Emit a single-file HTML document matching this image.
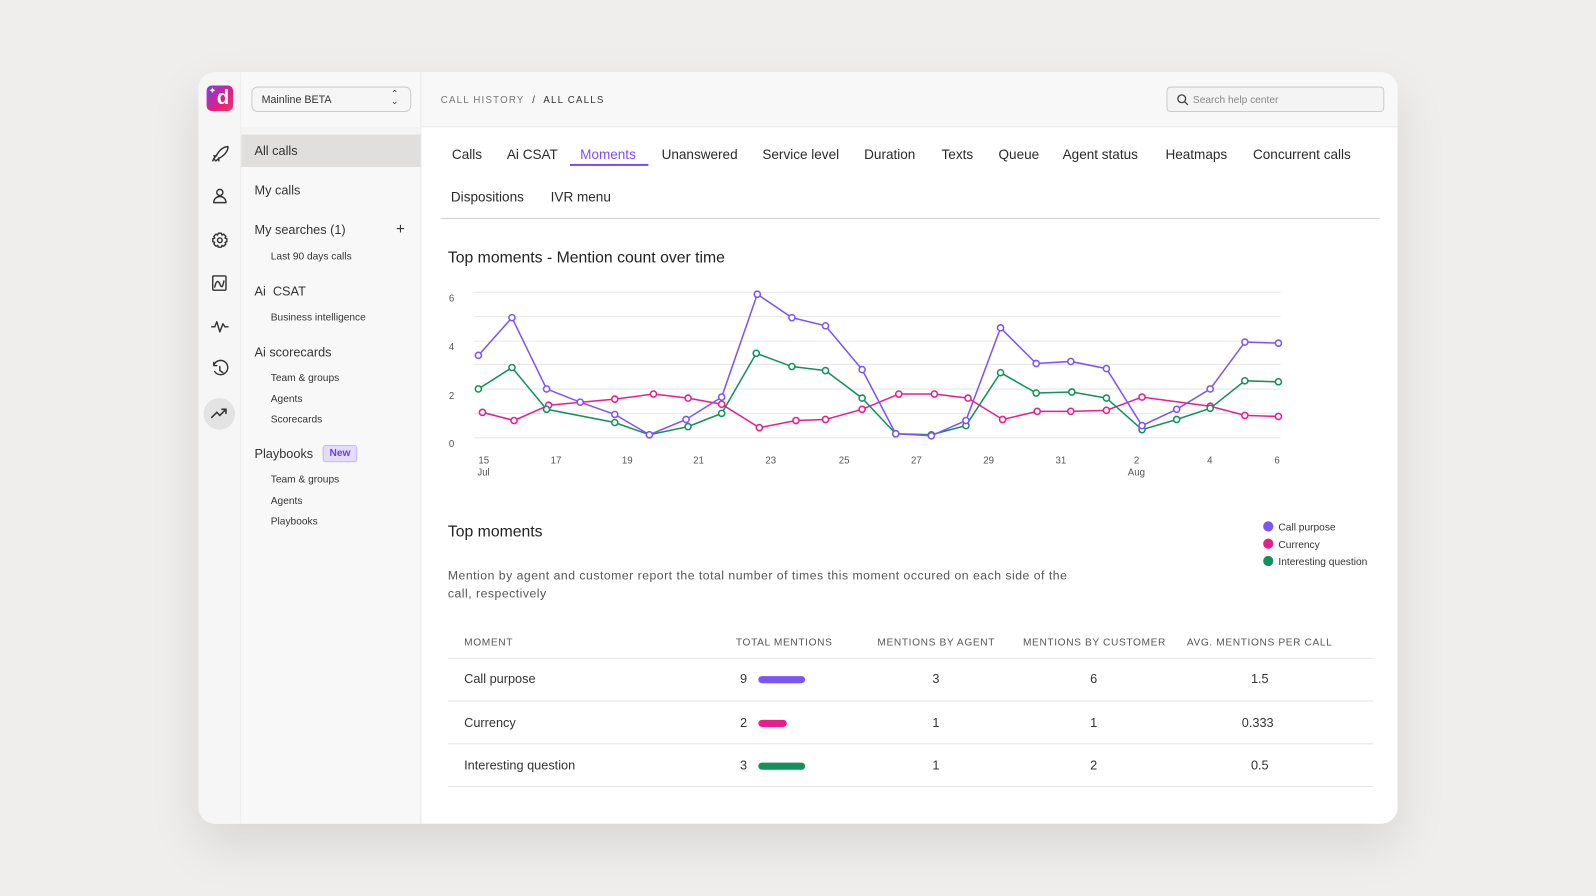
<!DOCTYPE html>
<html><head><meta charset="utf-8"><style>
*{margin:0;padding:0;box-sizing:border-box}
body{width:1596px;height:896px;overflow:hidden;background:#efeeec;font-family:"Liberation Sans",sans-serif;color:#222}
#w{position:absolute;left:0;top:0;width:1568px;height:880px;transform:scale(1.01786,1.01818);transform-origin:0 0}
.a{position:absolute;white-space:nowrap}
#card{position:absolute;left:195px;top:71px;width:1178px;height:738px;border-radius:16px;background:#fff;overflow:hidden;box-shadow:0 20px 50px rgba(0,0,0,.10)}
.tab{font-size:13.3px;color:#2a2a2a;font-weight:500}
.sb{font-size:12.5px;color:#333}
.sub{font-size:10px;color:#333}
.th{font-size:10px;letter-spacing:.6px;color:#555}
.td{font-size:12.5px;color:#333}
</style></head><body><div id="w">
<div id="card">
 <div class="a" style="left:0;top:0;width:42px;height:738px;background:#f6f6f6;border-right:1px solid #ececec"></div>
 <div class="a" style="left:42px;top:0;width:177px;height:738px;background:#f8f8f8;border-right:1px solid #e8e8e8"></div>
 <div class="a" style="left:219px;top:0;width:959px;height:54px;background:#f8f8f8;border-bottom:1px solid #ececec"></div>
 <div class="a" style="left:42px;top:54px;width:177px;height:6px;background:#f3f3f3"></div>
</div>
<div class="a" style="left:203px;top:84px;width:26px;height:25px;border-radius:5px;background:linear-gradient(135deg,#7b3fe4,#e0207f 60%,#f0386a)"></div>
<div class="a" style="left:213px;top:85px;font-size:20px;font-weight:bold;color:#fff">d</div>
<div class="a" style="left:205px;top:84px;font-size:9px;color:#fff">✦</div>
<svg class="a" style="left:205px;top:140px" width="22" height="290" viewBox="0 0 22 290" fill="none" stroke="#333" stroke-width="1.4" stroke-linecap="round" stroke-linejoin="round">
 <path d="M5 16l3-4c3-5 7-8 11-8c0 4-3 8-8 11l-4 3zM8 13l-3 0M10 15v3M6 14l-2 4"/>
 <circle cx="11" cy="49" r="3"/><path d="M5 59c0-4 3-6 6-6s6 2 6 6z"/>
 <circle cx="11" cy="96" r="2.3"/><path d="M9.5 89h3l.6 1.8 1.7-.8 2.1 2.1-.8 1.7 1.8.6v3l-1.8.6.8 1.7-2.1 2.1-1.7-.8-.6 1.8h-3l-.6-1.8-1.7.8-2.1-2.1.8-1.7-1.8-.6v-3l1.8-.6-.8-1.7 2.1-2.1 1.7.8z"/>
 <rect x="4" y="131" width="13" height="14" rx="1"/><path d="M6 142c1-5 3-8 5-3s3 2 4-3"/>
 <path d="M3 181h3l2-5 3 10 3-8 2 3h3"/>
 <path d="M5 219a7 7 0 1 1 1 6M5 219v-3M5 219h3M11 220v4l3 2"/>
</svg>
<div class="a" style="left:200px;top:391px;width:31px;height:31px;border-radius:50%;background:#e3e3e3"></div>
<svg class="a" style="left:206px;top:398px" width="20" height="16" fill="none" stroke="#333" stroke-width="1.5" stroke-linecap="round"><path d="M2 12l5-5 3 3 6-6M12 4h4v4"/></svg>
<div class="a" style="left:247px;top:85px;width:157px;height:25px;border:1px solid #ccc;border-radius:6px;background:#f6f6f6"></div>
<div class="a sub" style="left:257px;top:92px;font-size:10.5px">Mainline BETA</div>
<div class="a" style="left:384px;top:89px;font-size:9px;color:#333;line-height:7px">⌃<br>⌄</div>
<div class="a" style="left:237px;top:132px;width:176px;height:32px;background:#e0dfdd"></div>
<div class="a sb" style="left:250px;top:141px">All calls</div>
<div class="a sb" style="left:250px;top:180px">My calls</div>
<div class="a sb" style="left:250px;top:219px">My searches (1)</div>
<div class="a" style="left:389px;top:217px;font-size:15px;color:#333">+</div>
<div class="a sub" style="left:266px;top:247px">Last 90 days calls</div>
<div class="a sb" style="left:250px;top:279px">Ai&nbsp; CSAT</div>
<div class="a sub" style="left:266px;top:307px">Business intelligence</div>
<div class="a sb" style="left:250px;top:339px">Ai scorecards</div>
<div class="a sub" style="left:266px;top:366px">Team &amp; groups</div>
<div class="a sub" style="left:266px;top:387px">Agents</div>
<div class="a sub" style="left:266px;top:407px">Scorecards</div>
<div class="a sb" style="left:250px;top:439px">Playbooks</div>
<div class="a" style="left:317px;top:437px;width:34px;height:17px;border-radius:3px;background:#e4dcfd;border:1px solid #c7b6fb;color:#6a3fe6;font-size:10px;font-weight:bold;text-align:center;line-height:15px">New</div>
<div class="a sub" style="left:266px;top:466px">Team &amp; groups</div>
<div class="a sub" style="left:266px;top:487px">Agents</div>
<div class="a sub" style="left:266px;top:507px">Playbooks</div>
<div class="a" style="left:433px;top:93px;font-size:9.5px;letter-spacing:1.2px;color:#777">CALL HISTORY <b style="color:#333;font-weight:normal">&nbsp;/&nbsp; ALL CALLS</b></div>
<div class="a" style="left:1146px;top:85px;width:214px;height:25px;border:1px solid #ccc;border-radius:4px;background:#f4f4f4"></div>
<svg class="a" style="left:1156px;top:92px" width="12" height="12" fill="none" stroke="#444" stroke-width="1.3"><circle cx="5" cy="5" r="3.8"/><path d="M8 8l3 3"/></svg>
<div class="a" style="left:1172px;top:93px;font-size:10px;color:#888">Search help center</div>
<div class="a tab" style="left:444px;top:144px">Calls</div>
<div class="a tab" style="left:498px;top:144px">Ai CSAT</div>
<div class="a tab" style="left:570px;top:144px;color:#7c4dff">Moments</div>
<div class="a" style="left:560px;top:161px;width:77px;height:2px;background:#7c4dff"></div>
<div class="a tab" style="left:650px;top:144px">Unanswered</div>
<div class="a tab" style="left:749px;top:144px">Service level</div>
<div class="a tab" style="left:849px;top:144px">Duration</div>
<div class="a tab" style="left:925px;top:144px">Texts</div>
<div class="a tab" style="left:981px;top:144px">Queue</div>
<div class="a tab" style="left:1044px;top:144px">Agent status</div>
<div class="a tab" style="left:1145px;top:144px">Heatmaps</div>
<div class="a tab" style="left:1231px;top:144px">Concurrent calls</div>
<div class="a tab" style="left:443px;top:186px">Dispositions</div>
<div class="a tab" style="left:541px;top:186px">IVR menu</div>
<div class="a" style="left:433px;top:214px;width:923px;height:1px;background:#cfcfcf"></div>
<div class="a" style="left:440px;top:245px;font-size:15.5px;color:#222">Top moments - Mention count over time</div>
<svg class="a" style="left:0;top:0" width="1568" height="880" fill="none">
 <g stroke="#e6e6e6" stroke-width="1"><path d="M466 287H1258M466 311H1258M466 335H1258M466 358H1258M466 382H1258M466 406H1258M466 430H1258"/></g>
 <g font-family="Liberation Sans" font-size="9.5" fill="#555" stroke="none">
  <text x="441" y="296">6</text><text x="441" y="344">4</text><text x="441" y="392">2</text><text x="441" y="439">0</text>
  <text x="470" y="455">15</text><text x="469" y="467">Jul</text><text x="541" y="455">17</text><text x="611" y="455">19</text><text x="681" y="455">21</text><text x="752" y="455">23</text><text x="824" y="455">25</text><text x="895" y="455">27</text><text x="966" y="455">29</text><text x="1037" y="455">31</text><text x="1114" y="455">2</text><text x="1108" y="467">Aug</text><text x="1186" y="455">4</text><text x="1252" y="455">6</text>
 </g>
 <g stroke-width="1.5" fill="#fff">
 <polyline fill="none" stroke="#e91e8c" points="474,405 505,413 539,398 604,392 642,387 676,391 709,397 746,420 782,413 811,412 847,402 883,387 918,387 951,391 985,412 1019,404 1052,404 1087,403 1122,390 1189,399 1223,408 1256,409"/>
 <polyline fill="none" stroke="#12915a" points="470,382 503,361 537,402 604,415 638,427 676,419 709,406 743,347 778,360 811,364 847,391 880,426 915,427 949,418 983,366 1018,386 1053,385 1087,391 1122,422 1156,412 1189,401 1223,374 1256,375"/>
 <polyline fill="none" stroke="#7c55f7" points="470,349 503,312 537,382 570,395 604,407 638,427 674,412 709,390 744,289 778,312 811,320 847,363 880,426 915,428 949,413 983,322 1018,357 1052,355 1087,362 1122,418 1156,402 1189,382 1223,336 1256,337"/>
 <g stroke="#e91e8c"><circle cx="474" cy="405" r="3"/><circle cx="505" cy="413" r="3"/><circle cx="539" cy="398" r="3"/><circle cx="604" cy="392" r="3"/><circle cx="642" cy="387" r="3"/><circle cx="676" cy="391" r="3"/><circle cx="709" cy="397" r="3"/><circle cx="746" cy="420" r="3"/><circle cx="782" cy="413" r="3"/><circle cx="811" cy="412" r="3"/><circle cx="847" cy="402" r="3"/><circle cx="883" cy="387" r="3"/><circle cx="918" cy="387" r="3"/><circle cx="951" cy="391" r="3"/><circle cx="985" cy="412" r="3"/><circle cx="1019" cy="404" r="3"/><circle cx="1052" cy="404" r="3"/><circle cx="1087" cy="403" r="3"/><circle cx="1122" cy="390" r="3"/><circle cx="1189" cy="399" r="3"/><circle cx="1223" cy="408" r="3"/><circle cx="1256" cy="409" r="3"/></g>
 <g stroke="#12915a"><circle cx="470" cy="382" r="3"/><circle cx="503" cy="361" r="3"/><circle cx="537" cy="402" r="3"/><circle cx="604" cy="415" r="3"/><circle cx="638" cy="427" r="3"/><circle cx="676" cy="419" r="3"/><circle cx="709" cy="406" r="3"/><circle cx="743" cy="347" r="3"/><circle cx="778" cy="360" r="3"/><circle cx="811" cy="364" r="3"/><circle cx="847" cy="391" r="3"/><circle cx="880" cy="426" r="3"/><circle cx="915" cy="427" r="3"/><circle cx="949" cy="418" r="3"/><circle cx="983" cy="366" r="3"/><circle cx="1018" cy="386" r="3"/><circle cx="1053" cy="385" r="3"/><circle cx="1087" cy="391" r="3"/><circle cx="1122" cy="422" r="3"/><circle cx="1156" cy="412" r="3"/><circle cx="1189" cy="401" r="3"/><circle cx="1223" cy="374" r="3"/><circle cx="1256" cy="375" r="3"/></g>
 <g stroke="#7c55f7"><circle cx="470" cy="349" r="3"/><circle cx="503" cy="312" r="3"/><circle cx="537" cy="382" r="3"/><circle cx="570" cy="395" r="3"/><circle cx="604" cy="407" r="3"/><circle cx="638" cy="427" r="3"/><circle cx="674" cy="412" r="3"/><circle cx="709" cy="390" r="3"/><circle cx="744" cy="289" r="3"/><circle cx="778" cy="312" r="3"/><circle cx="811" cy="320" r="3"/><circle cx="847" cy="363" r="3"/><circle cx="880" cy="426" r="3"/><circle cx="915" cy="428" r="3"/><circle cx="949" cy="413" r="3"/><circle cx="983" cy="322" r="3"/><circle cx="1018" cy="357" r="3"/><circle cx="1052" cy="355" r="3"/><circle cx="1087" cy="362" r="3"/><circle cx="1122" cy="418" r="3"/><circle cx="1156" cy="402" r="3"/><circle cx="1189" cy="382" r="3"/><circle cx="1223" cy="336" r="3"/><circle cx="1256" cy="337" r="3"/></g>
 </g>
 <g stroke="none"><circle cx="1246" cy="517" r="5" fill="#7c55f7"/><circle cx="1246" cy="534" r="5" fill="#e91e8c"/><circle cx="1246" cy="551" r="5" fill="#12915a"/></g>
</svg>
<div class="a" style="left:1256px;top:510px;font-size:10px;color:#333;line-height:17px">Call purpose<br>Currency<br>Interesting question</div>
<div class="a" style="left:440px;top:514px;font-size:15.5px;color:#222">Top moments</div>
<div class="a" style="left:440px;top:556px;font-size:12px;letter-spacing:.5px;color:#555;line-height:18px;white-space:normal;width:622px">Mention by agent and customer report the total number of times this moment occured on each side of the call, respectively</div>
<div class="a th" style="left:456px;top:626px">MOMENT</div>
<div class="a th" style="left:723px;top:626px">TOTAL MENTIONS</div>
<div class="a th" style="left:862px;top:626px">MENTIONS BY AGENT</div>
<div class="a th" style="left:1005px;top:626px">MENTIONS BY CUSTOMER</div>
<div class="a th" style="left:1166px;top:626px">AVG. MENTIONS PER CALL</div>
<div class="a" style="left:440px;top:646px;width:909px;height:1px;background:#e4e4e4"></div>
<div class="a" style="left:440px;top:688px;width:909px;height:1px;background:#e4e4e4"></div>
<div class="a" style="left:440px;top:730px;width:909px;height:1px;background:#e4e4e4"></div>
<div class="a" style="left:440px;top:772px;width:909px;height:1px;background:#e4e4e4"></div>
<div class="a td" style="left:456px;top:660px">Call purpose</div>
<div class="a td" style="left:456px;top:703px">Currency</div>
<div class="a td" style="left:456px;top:745px">Interesting question</div>
<div class="a td" style="left:727px;top:660px">9</div><div class="a" style="left:745px;top:664px;width:46px;height:7px;border-radius:4px;background:#7c55f7"></div>
<div class="a td" style="left:727px;top:703px">2</div><div class="a" style="left:745px;top:707px;width:28px;height:7px;border-radius:4px;background:#e91e8c"></div>
<div class="a td" style="left:727px;top:745px">3</div><div class="a" style="left:745px;top:749px;width:46px;height:7px;border-radius:4px;background:#12915a"></div>
<div class="a td" style="left:916px;top:660px">3</div><div class="a td" style="left:916px;top:703px">1</div><div class="a td" style="left:916px;top:745px">1</div>
<div class="a td" style="left:1071px;top:660px">6</div><div class="a td" style="left:1071px;top:703px">1</div><div class="a td" style="left:1071px;top:745px">2</div>
<div class="a td" style="left:1229px;top:660px">1.5</div><div class="a td" style="left:1220px;top:703px">0.333</div><div class="a td" style="left:1229px;top:745px">0.5</div>
</div></body></html>
